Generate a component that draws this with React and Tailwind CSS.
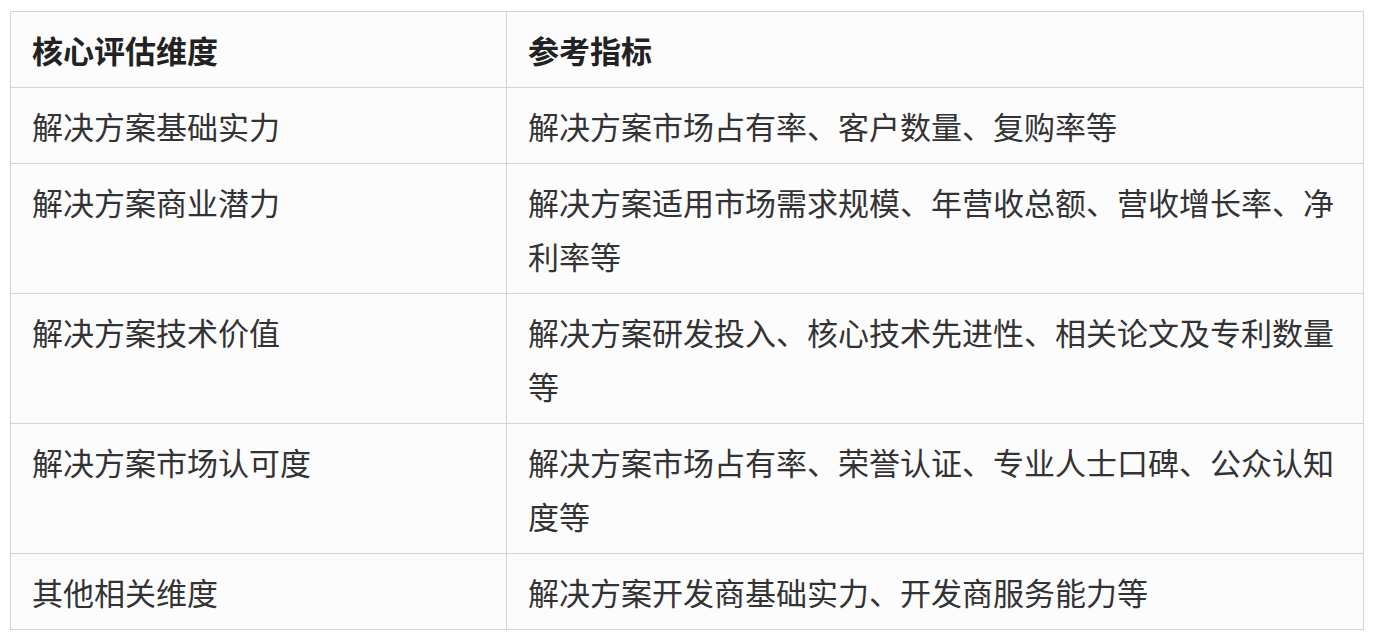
import React from "react";

const rows = [
  ["解决方案基础实力", "解决方案市场占有率、客户数量、复购率等"],
  ["解决方案商业潜力", "解决方案适用市场需求规模、年营收总额、营收增长率、净利率等"],
  ["解决方案技术价值", "解决方案研发投入、核心技术先进性、相关论文及专利数量等"],
  ["解决方案市场认可度", "解决方案市场占有率、荣誉认证、专业人士口碑、公众认知度等"],
  ["其他相关维度", "解决方案开发商基础实力、开发商服务能力等"],
];

function App() {
  return (
    <div
      className="min-h-screen bg-white pl-[10px] pt-[11px]"
      style={{ fontFamily: '"Noto Sans CJK SC", "Noto Sans", sans-serif' }}
    >
      <table className="w-[1353px] table-fixed border-collapse bg-[#fcfcfd] text-[31px] leading-[54px] text-[#333]">
        <colgroup>
          <col className="w-[496px]" />
          <col className="w-[857px]" />
        </colgroup>
        <thead>
          <tr>
            <th className="border border-[#d4d4d6] pl-[21px] pr-[22px] pt-[11px] pb-[10px] text-left font-bold text-[#222]">
              核心评估维度
            </th>
            <th className="border border-[#d4d4d6] pl-[21px] pr-[22px] pt-[11px] pb-[10px] text-left font-bold text-[#222]">
              参考指标
            </th>
          </tr>
        </thead>
        <tbody>
          {rows.map(([a, b]) => (
            <tr key={a}>
              <td className="border border-[#d4d4d6] pl-[21px] pr-[22px] pt-[11px] pb-[10px] align-top">{a}</td>
              <td className="border border-[#d4d4d6] pl-[21px] pr-[22px] pt-[11px] pb-[10px] align-top">{b}</td>
            </tr>
          ))}
        </tbody>
      </table>
    </div>
  );
}

export default App;
